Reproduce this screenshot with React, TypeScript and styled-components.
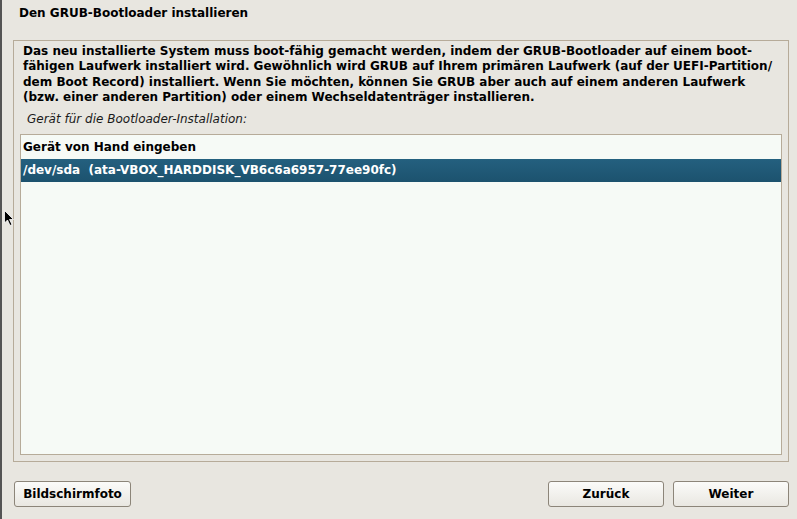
import React from 'react';
import styled, { createGlobalStyle } from 'styled-components';

const GlobalStyle = createGlobalStyle`
  html, body {
    margin: 0;
    padding: 0;
    background: #e8e6e0;
  }
  body {
    font-family: "DejaVu Sans", "Liberation Sans", sans-serif;
    font-size: 12px;
    color: #000;
  }
`;

type Device = {
  label: string
}

const devices: Device[] = [
  { label: 'Gerät von Hand eingeben' },
  { label: '/dev/sda  (ata-VBOX_HARDDISK_VB6c6a6957-77ee90fc)' },
];

const SELECTED = 1;

export default function App() {
  return (
    <>
      <GlobalStyle />
      <Screen>
        <Title>Den GRUB-Bootloader installieren</Title>
        <Frame>
          <Description>
            Das neu installierte System muss boot-fähig gemacht werden, indem der GRUB-Bootloader auf einem boot-fähigen
            Laufwerk installiert wird. Gewöhnlich wird GRUB auf Ihrem primären Laufwerk (auf der UEFI-Partition/
            dem Boot Record) installiert. Wenn Sie möchten, können Sie GRUB aber auch auf einem anderen Laufwerk
            (bzw. einer anderen Partition) oder einem Wechseldatenträger installieren.
          </Description>
          <Prompt>Gerät für die Bootloader-Installation:</Prompt>
          <DeviceList>
            {devices.map((d, i) => (
              <DeviceRow key={d.label} $selected={i === SELECTED}>
                {d.label}
              </DeviceRow>
            ))}
          </DeviceList>
        </Frame>
        <ButtonBar>
          <Button>Bildschirmfoto</Button>
          <Spacer />
          <Button>Zurück</Button>
          <Button>Weiter</Button>
        </ButtonBar>
        <Pointer viewBox="0 0 10 16" width="10" height="16">
          <path d="M0.5 0.5 L0.5 13 L3.5 10 L6 15.5 L8 14.5 L5.5 9.5 L9.5 9.5 Z" fill="#000" stroke="#fff" strokeWidth="0.8" />
        </Pointer>
      </Screen>
    </>
  )
}

const Screen = styled.div`
  position: relative;
  box-sizing: border-box;
  width: 797px;
  height: 519px;
  border-left: 2px solid #545454;
  display: flex;
  flex-direction: column;
  overflow: hidden;
`;

const Title = styled.h1`
  margin: 0;
  height: 40px;
  box-sizing: border-box;
  padding: 6px 0 0 17px;
  font-size: 12px;
  font-weight: bold;
  line-height: 15px;
`;

const Frame = styled.div`
  box-sizing: border-box;
  margin-left: 11px;
  width: 776px;
  height: 422px;
  border: 1px solid #b6ab99;
  padding: 3px 6px 6px 6px;
  display: flex;
  flex-direction: column;
`;

const Description = styled.p`
  margin: 0;
  padding: 0 4px 0 3px;
  font-weight: bold;
  line-height: 15.3px;
`;

const Prompt = styled.div`
  padding: 7px 0 0 7px;
  height: 23px;
  box-sizing: border-box;
  font-style: italic;
  font-size: 12px;
  line-height: 15px;
  color: #1a1a1a;
`;

const DeviceList = styled.div`
  flex: 1;
  margin-top: 6px;
  border: 1px solid #b6ab99;
  background: #f6faf6;
  padding-top: 1px;
`;

const DeviceRow = styled.div<{ $selected?: boolean }>`
  height: 23px;
  line-height: 23px;
  padding-left: 2px;
  white-space: pre;
  font-weight: bold;
  color: ${p => (p.$selected ? '#fff' : '#000')};
  background: ${p => (p.$selected ? 'linear-gradient(#24607f, #1c526e)' : 'transparent')};
`;

const ButtonBar = styled.div`
  display: flex;
  gap: 9px;
  padding: 19px 8px 0 12px;
`;

const Spacer = styled.div`
  flex: 1;
`;

const Button = styled.button`
  box-sizing: border-box;
  width: 116px;
  height: 26px;
  border: 1px solid #8c8579;
  border-radius: 3px;
  background: linear-gradient(#fbfbf9, #e9e7e1);
  font-family: "DejaVu Sans", "Liberation Sans", sans-serif;
  font-size: 12px;
  font-weight: bold;
  color: #000;
  padding: 0;

  &:first-child {
    width: 117px;
  }
`;

const Pointer = styled.svg`
  position: absolute;
  left: 2px;
  top: 210px;
`;
